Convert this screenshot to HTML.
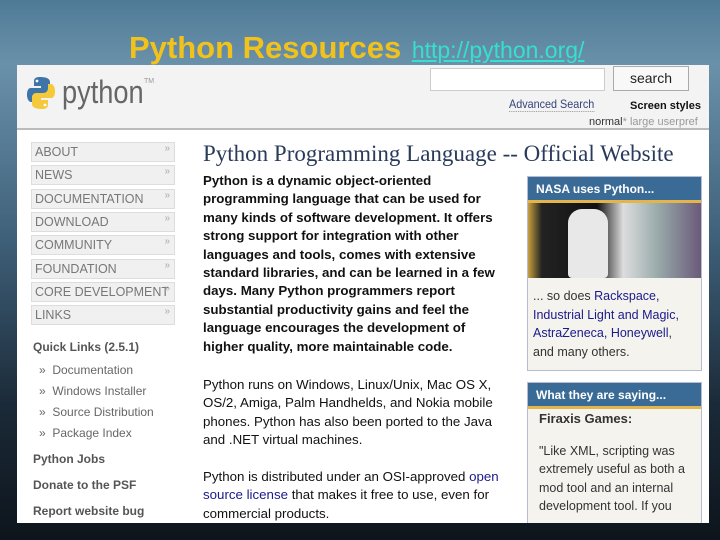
<!DOCTYPE html>
<html><head><meta charset="utf-8"><style>
*{margin:0;padding:0;box-sizing:border-box}
body{width:720px;height:540px;overflow:hidden;position:relative;font-family:"Liberation Sans",sans-serif;
background:linear-gradient(180deg,#4f7a96 0%,#6a91aa 12%,#3e5f78 45%,#1b2a38 75%,#0d141c 100%);}
.title{position:absolute;left:129px;top:30px;font-size:31px;color:#f2c21c;font-weight:bold;white-space:nowrap;line-height:36px}
.title a{font-size:23px;font-weight:normal;color:#35e0d0;text-decoration:underline;margin-left:2px}
.shot{position:absolute;left:17px;top:65px;width:692px;height:458px;background:#fff;overflow:hidden}
.hdr{position:absolute;left:0;top:0;width:692px;height:65px;background:#f3f3f3;border-bottom:2px solid #bbb}
.nav{position:absolute;left:14px;width:144px;height:20px;background:#f0f0f0;border:1px solid #ddd;font-size:12.5px;color:#777;padding:2px 0 0 3px;white-space:nowrap;overflow:hidden}
.nav span{position:absolute;right:4px;top:0;font-size:10px;color:#aaa}
.ql{position:absolute;left:16px;font-size:12px;color:#555;font-weight:bold}
.qi{position:absolute;left:22px;font-size:12px;color:#666}
.main{position:absolute;left:186px;font-size:13.3px;line-height:18.4px;color:#111;width:300px}
.box{position:absolute;left:510px;width:175px;background:#f5f3ee;border:1px solid #b8bcd0}
.bh{background:#3a6b96;color:#fff;font-weight:bold;font-size:12px;height:26px;padding:5px 8px;border-bottom:3px solid #e3b54a}
a.l{color:#1a1a8a;text-decoration:none}
</style></head><body>
<div class="title">Python Resources <a>http://python.org/</a></div>
<div class="shot">
<div class="hdr">
 <svg style="position:absolute;left:10px;top:10px" width="28" height="36" viewBox="0 0 28 36">
  <path d="M13 2c-6 0-6 3-6 5v4h7v2H4c-3 0-4 3-4 7s2 7 4 7h3v-4c0-3 2-5 5-5h7c2 0 4-2 4-4V7c0-3-3-5-10-5z" fill="#3f74a8"/>
  <path d="M15 34c6 0 6-3 6-5v-4h-7v-2h10c3 0 4-3 4-7s-2-7-4-7h-3v4c0 3-2 5-5 5H9c-2 0-4 2-4 4v7c0 3 3 5 10 5z" fill="#f4c93c"/>
  <circle cx="10" cy="6" r="1.4" fill="#fff"/><circle cx="18" cy="30" r="1.4" fill="#fff"/>
 </svg>
 <div style="position:absolute;left:45px;top:9px;font-size:32px;color:#666;transform:scaleX(0.85);transform-origin:left">python</div>
 <div style="position:absolute;left:127px;top:13px;font-size:7px;color:#999">TM</div>
 <div style="position:absolute;left:413px;top:3px;width:175px;height:23px;background:#fff;border:1px solid #ccc"></div>
 <div style="position:absolute;left:596px;top:1px;width:76px;height:25px;background:#f8f8f8;border:1px solid #aaa;font-size:14px;color:#222;text-align:center;padding-top:3px">search</div>
 <div style="position:absolute;left:492px;top:32px;font-size:12px;color:#33447a;border-bottom:1px dotted #999;transform:scaleX(0.9);transform-origin:left">Advanced Search</div>
 <div style="position:absolute;left:613px;top:35px;font-size:11px;font-weight:bold;color:#111">Screen styles</div>
 <div style="position:absolute;left:572px;top:51px;font-size:11px;color:#333">normal<span style="color:#999">* large userpref</span></div>
</div>
<div class="nav" style="top:77px">ABOUT<span>»</span></div>
<div class="nav" style="top:100px">NEWS<span>»</span></div>
<div class="nav" style="top:124px">DOCUMENTATION<span>»</span></div>
<div class="nav" style="top:147px">DOWNLOAD<span>»</span></div>
<div class="nav" style="top:170px">COMMUNITY<span>»</span></div>
<div class="nav" style="top:194px">FOUNDATION<span>»</span></div>
<div class="nav" style="top:217px">CORE DEVELOPMENT<span>»</span></div>
<div class="nav" style="top:240px">LINKS<span>»</span></div>
<div class="ql" style="top:275px">Quick Links (2.5.1)</div>
<div class="qi" style="top:298px">» &nbsp;Documentation</div>
<div class="qi" style="top:319px">» &nbsp;Windows Installer</div>
<div class="qi" style="top:340px">» &nbsp;Source Distribution</div>
<div class="qi" style="top:361px">» &nbsp;Package Index</div>
<div class="ql" style="top:387px">Python Jobs</div>
<div class="ql" style="top:413px">Donate to the PSF</div>
<div class="ql" style="top:439px">Report website bug</div>
<div style="position:absolute;left:186px;top:76px;font-family:'Liberation Serif',serif;font-size:23px;color:#2a3a5a;white-space:nowrap">Python Programming Language -- Official Website</div>
<div class="main" style="top:107px;font-weight:bold">Python is a dynamic object-oriented programming language that can be used for many kinds of software development. It offers strong support for integration with other languages and tools, comes with extensive standard libraries, and can be learned in a few days. Many Python programmers report substantial productivity gains and feel the language encourages the development of higher quality, more maintainable code.</div>
<div class="main" style="top:311px">Python runs on Windows, Linux/Unix, Mac OS X, OS/2, Amiga, Palm Handhelds, and Nokia mobile phones. Python has also been ported to the Java and .NET virtual machines.</div>
<div class="main" style="top:403px">Python is distributed under an OSI-approved <a class="l">open source license</a> that makes it free to use, even for commercial products.</div>
<div class="box" style="top:111px;height:195px">
 <div class="bh">NASA uses Python...</div>
 <div style="height:75px;background:linear-gradient(90deg,#c9a040 0%,#222 8%,#111 40%,#ddd 55%,#9aa 75%,#6a5a7a 100%);position:relative">
  <div style="position:absolute;left:40px;top:6px;width:40px;height:69px;background:#e8e8e8;border-radius:14px 14px 4px 4px"></div>
 </div>
 <div style="padding:9px 5px;font-size:12.5px;line-height:18.5px;color:#333">... so does <a class="l">Rackspace, Industrial Light and Magic, AstraZeneca, Honeywell</a>, and many others.</div>
</div>
<div class="box" style="top:317px;height:150px">
 <div class="bh">What they are saying...</div>
 <div style="padding:2px 11px;font-size:13px;font-weight:bold;color:#333">Firaxis Games:</div>
 <div style="padding:14px 11px 0;font-size:12.5px;line-height:18.3px;color:#333">"Like XML, scripting was extremely useful as both a mod tool and an internal development tool. If you</div>
</div>
</div>
</body></html>
